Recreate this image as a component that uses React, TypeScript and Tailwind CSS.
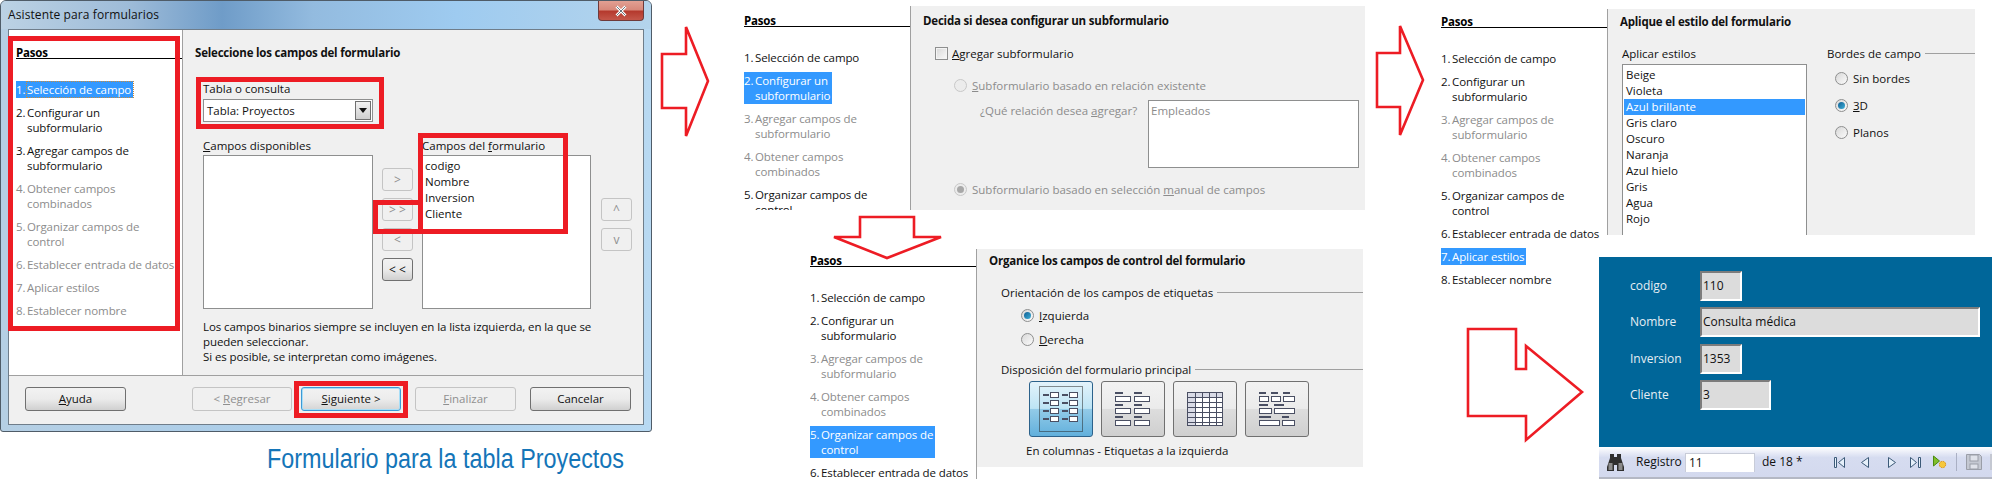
import React from "react";

const RED = "#ed1c24";
const STEPS: [string, string][] = [
  ["1.", "Selección de campo"],
  ["2.", "Configurar un\nsubformulario"],
  ["3.", "Agregar campos de\nsubformulario"],
  ["4.", "Obtener campos\ncombinados"],
  ["5.", "Organizar campos de\ncontrol"],
  ["6.", "Establecer entrada de datos"],
  ["7.", "Aplicar estilos"],
  ["8.", "Establecer nombre"],
];

function Sidebar({ active, disabled, width, focus }: { active: number; disabled: number[]; width: number; focus?: boolean }) {
  return (
    <div className="shrink-0" style={{ width }}>
      <div className="h-[13px] box-border border-b border-black text-[11.5px] leading-[13px] font-bold tracking-[-0.2px] text-black">
        Pasos
      </div>
      <div className="mt-[22px] flex flex-col items-start gap-[6px]">
        {STEPS.map(([n, t], i) => {
          const isActive = i === active;
          const isOff = disabled.includes(i);
          return (
            <div
              key={n}
              className={`flex py-px leading-[15px] tracking-[-0.1px] ${isActive ? "bg-[#3399ff] text-white" : isOff ? "text-[#8c8c8c]" : "text-[#111111]"}`}
            >
              <span className="w-[11px] shrink-0">{n}</span>
              <span className={`whitespace-pre-line pr-[2px] ${isActive && focus ? "outline-1 outline-dotted outline-[#c98a3a]" : ""}`}>{t}</span>
            </div>
          );
        })}
      </div>
    </div>
  );
}

function Btn({ children, off, primary, className = "" }: { children: React.ReactNode; off?: boolean; primary?: boolean; className?: string }) {
  return (
    <div
      className={`flex items-center justify-center rounded-[3px] border ${
        off
          ? "border-[#c4c4c4] bg-[#f0f0f0] text-[#8f8f8f]"
          : primary
          ? "border-[#3c9ad6] bg-gradient-to-b from-[#f2f2f2] via-[#ececec] to-[#d4d4d4] text-[#111111] shadow-[inset_0_0_0_1px_#a8def7]"
          : "border-[#707070] bg-gradient-to-b from-[#f2f2f2] via-[#ebebeb] to-[#d0d0d0] text-[#111111]"
      } ${className}`}
    >
      {children}
    </div>
  );
}

function Radio({ on, off }: { on?: boolean; off?: boolean }) {
  return (
    <span
      className={`flex h-[13px] w-[13px] shrink-0 items-center justify-center rounded-full border ${
        off ? "border-[#c8c8c8] bg-[#ececec]" : "border-[#8e8f8f] bg-gradient-to-br from-[#d8d8d8] to-[#fbfbfb]"
      }`}
    >
      {on && <span className={`h-[7px] w-[7px] rounded-full ${off ? "bg-[#a8a8a8]" : "bg-gradient-to-br from-[#0f5f94] to-[#3fb0d8]"}`} />}
    </span>
  );
}

function Frame({ x, y, w, h }: { x: number; y: number; w: number; h: number }) {
  return <div className="absolute box-border border-[5px] border-[#ed1c24]" style={{ left: x, top: y, width: w, height: h }} />;
}

function Arrow({ points, x, y, w, h }: { points: string; x: number; y: number; w: number; h: number }) {
  return (
    <svg className="absolute" style={{ left: x, top: y }} width={w} height={h} viewBox={`${x} ${y} ${w} ${h}`}>
      <polygon points={points} fill="none" stroke={RED} strokeWidth="2.6" strokeLinejoin="miter" />
    </svg>
  );
}

function Wizard() {
  return (
    <div className="absolute left-0 top-0 flex h-[432px] w-[652px] flex-col overflow-hidden rounded-t-[6px] rounded-b-[3px] border border-[#4f5c68] bg-gradient-to-r from-[#b5cfe4] via-[#a9cdea] to-[#b8d9f2]">
      <div className="relative flex h-[28px] shrink-0 items-center bg-[linear-gradient(90deg,#bcd2e4_0%,#9dbbd8_20%,#6f9cc8_34%,#93bbdf_48%,#9ecbf0_70%,#b4d4ec_100%)] pl-[7px] text-[12px] tracking-[0.1px] text-[#111111]">
        <span>Asistente para formularios</span>
        <div className="absolute right-[7px] top-0 flex h-[20px] w-[46px] items-center justify-center rounded-b-[4px] border border-t-0 border-[#6e3a3a] bg-[linear-gradient(#e2a093_0%,#d8897b_45%,#b53a2e_55%,#c4574a_100%)]">
          <svg width="12" height="12" viewBox="0 0 12 12">
            <path d="M1.5 1.5 L10.5 10.5 M10.5 1.5 L1.5 10.5" stroke="#ffffff" strokeWidth="2.8" />
            <path d="M1.5 1.5 L10.5 10.5 M10.5 1.5 L1.5 10.5" stroke="#41505c" strokeWidth="0.8" />
          </svg>
        </div>
      </div>
      <div className="mx-[7px] flex h-[396px] flex-col border border-[#6f7d8a] bg-[#f0f0f0]">
        <div className="flex h-[346px] border-b border-[#a0a0a0]">
          <div className="h-full w-[174px] shrink-0 border-r border-[#a0a0a0] bg-white pl-[7px] pt-[16px]">
            <Sidebar active={0} disabled={[3, 4, 5, 6, 7]} width={166} focus />
          </div>
          <div className="flex-1 pl-[12px] text-[#111111]">
            <div className="mt-[16px] h-[14px] text-[11.5px] leading-[14px] font-bold tracking-[-0.2px]">Seleccione los campos del formulario</div>
            <div className="ml-[8px]">
              <div className="mt-[21px] leading-[15px]">Tabla o consulta</div>
              <div className="mt-[3px] flex h-[23px] w-[170px] items-center justify-between border border-[#8e8f8f] bg-white pl-[3px] pr-[1px]">
                <span>Tabla: Proyectos</span>
                <span className="flex h-[19px] w-[16px] items-center justify-center border border-[#707070] bg-gradient-to-b from-[#f2f2f2] to-[#cfcfcf]">
                  <svg width="8" height="5" viewBox="0 0 8 5"><path d="M0 0H8L4 5Z" fill="#111" /></svg>
                </span>
              </div>
              <div className="mt-[16px] flex">
                <div className="w-[170px]">
                  <div className="h-[12px] leading-[15px]"><u>C</u>ampos disponibles</div>
                  <div className="mt-[5px] h-[154px] border border-[#8e8f8f] bg-white" />
                </div>
                <div className="ml-[9px] mt-[30px] flex w-[31px] flex-col gap-[7px]">
                  <Btn off className="h-[23px] text-[12px]">&gt;</Btn>
                  <Btn off className="h-[23px] text-[12px]">&gt; &gt;</Btn>
                  <Btn off className="h-[23px] text-[12px]">&lt;</Btn>
                  <Btn className="h-[23px] text-[12px]">&lt; &lt;</Btn>
                </div>
                <div className="ml-[9px] w-[169px]">
                  <div className="h-[12px] leading-[15px]">Campos del <u>f</u>ormulario</div>
                  <div className="mt-[5px] h-[154px] border border-[#8e8f8f] bg-white pl-[2px] pt-[2px] leading-[16px]">
                    <div>codigo</div>
                    <div>Nombre</div>
                    <div>Inversion</div>
                    <div>Cliente</div>
                  </div>
                </div>
                <div className="ml-[10px] mt-[60px] flex w-[31px] flex-col gap-[7px]">
                  <Btn off className="h-[23px] text-[12px]">^</Btn>
                  <Btn off className="h-[23px] text-[12px]">v</Btn>
                </div>
              </div>
              <div className="mt-[10px] whitespace-nowrap leading-[15px] tracking-[-0.1px]">
                Los campos binarios siempre se incluyen en la lista izquierda, en la que se
                <br />
                pueden seleccionar.
                <br />
                Si es posible, se interpretan como imágenes.
              </div>
            </div>
          </div>
        </div>
        <div className="flex flex-1 items-start pl-[16px] pt-[11px] text-[#111111]">
          <Btn className="h-[24px] w-[101px]"><span><u>A</u>yuda</span></Btn>
          <Btn off className="ml-[66px] h-[24px] w-[100px]"><span>&lt; <u>R</u>egresar</span></Btn>
          <Btn primary className="ml-[9px] h-[24px] w-[100px]"><span><u>S</u>iguiente &gt;</span></Btn>
          <Btn off className="ml-[14px] h-[24px] w-[101px]"><span><u>F</u>inalizar</span></Btn>
          <Btn className="ml-[14px] h-[24px] w-[101px]">Cancelar</Btn>
        </div>
      </div>
    </div>
  );
}

function GridIcon() {
  const col = "#4a4f63";
  return (
    <svg width="36" height="34" viewBox="0 0 36 34">
      <rect x="0.5" y="0.5" width="35" height="33" fill="#fff" stroke={col} />
      <rect x="1" y="1" width="34" height="4" fill="#d9dbe6" />
      <rect x="1" y="6" width="7" height="27" fill="#d9dbe6" />
      {[0, 1, 2, 3, 4, 5].map((i) => (
        <line key={`h${i}`} x1="0" x2="36" y1={5.5 + i * 5} y2={5.5 + i * 5} stroke={col} />
      ))}
      {[0, 1, 2, 3].map((i) => (
        <line key={`v${i}`} y1="0" y2="34" x1={8.5 + i * 7} x2={8.5 + i * 7} stroke={col} />
      ))}
    </svg>
  );
}

function FieldRow({ x, y, w, lw = 0 }: { x: number; y: number; w: number; lw?: number }) {
  return (
    <g>
      {lw > 0 && <rect x={x} y={y} width={lw} height="2" fill="#4a4f63" />}
      <rect x={x + 0.5} y={y + 4.5} width={w} height="5" fill="#fff" stroke="#4a4f63" />
    </g>
  );
}

function LayoutIcon({ kind }: { kind: number }) {
  if (kind === 0) {
    return (
      <svg width="46" height="46" viewBox="0 0 46 46">
        <rect x="1.5" y="0.5" width="43" height="45" fill="none" stroke="#222" strokeDasharray="1 1" />
        {[6, 14, 22, 30].map((y) => (
          <g key={y}>
            <rect x="5" y={y + 2} width="6" height="2" fill="#4a4f63" />
            <rect x="12.5" y={y + 0.5} width="8" height="5" fill="#fff" stroke="#4a4f63" />
            <rect x="24" y={y + 2} width="6" height="2" fill="#4a4f63" />
            <rect x="31.5" y={y + 0.5} width="8" height="5" fill="#fff" stroke="#4a4f63" />
          </g>
        ))}
      </svg>
    );
  }
  if (kind === 1) {
    return (
      <svg width="36" height="34" viewBox="0 0 36 34">
        {[0, 12, 24].map((y) => (
          <g key={y}>
            <FieldRow x={0} y={y} w={15} lw={8} />
            <FieldRow x={19} y={y} w={15} lw={8} />
          </g>
        ))}
      </svg>
    );
  }
  if (kind === 2) return <GridIcon />;
  return (
    <svg width="36" height="34" viewBox="0 0 36 34">
      <FieldRow x={0} y={0} w={9} lw={7} />
      <FieldRow x={12} y={0} w={9} lw={7} />
      <FieldRow x={24} y={0} w={11} lw={7} />
      <FieldRow x={0} y={12} w={12} lw={9} />
      <FieldRow x={15} y={12} w={20} lw={10} />
      <FieldRow x={0} y={24} w={20} lw={12} />
      <FieldRow x={23} y={24} w={12} lw={7} />
    </svg>
  );
}

function ImgBtn({ i, on }: { i: number; on?: boolean }) {
  return (
    <div
      className={`flex h-[56px] w-[64px] items-center justify-center rounded-[3px] border ${
        on ? "border-[#2c628b] bg-[linear-gradient(#e3f3fb_0%,#bde4f5_49%,#93cbe8_50%,#62b0dc_100%)]" : "border-[#707070] bg-[linear-gradient(#f2f2f2_0%,#ebebeb_49%,#dddddd_50%,#cfcfcf_100%)]"
      }`}
    >
      <LayoutIcon kind={i} />
    </div>
  );
}

function Field({ label, value, w }: { label: string; value: string; w: number }) {
  return (
    <div className="flex h-[30px] items-center">
      <span className="w-[70px] text-[12px] text-[#e6eef4]">{label}</span>
      <div
        className="box-border flex h-[30px] items-center border-2 border-t-[#7c7c7c] border-l-[#7c7c7c] border-r-white border-b-white bg-[#dcdcdc] pl-[1px] text-[12px] text-[#111111]"
        style={{ width: w }}
      >
        {value}
      </div>
    </div>
  );
}

function NavIcon({ d, w, className = "" }: { d: string; w: number; className?: string }) {
  return (
    <svg width={w} height="13" viewBox={`0 0 ${w} 13`} className={`shrink-0 ${className}`}>
      <path d={d} fill="#e6f0fa" stroke="#3c5a78" strokeWidth="1" />
    </svg>
  );
}

function Toolbar() {
  return (
    <div className="flex h-[32px] items-center overflow-hidden border-b-2 border-[#b4b8c4] bg-[linear-gradient(#ffffff_0%,#d6dcf0_35%,#d3d9ee_100%)] pl-[8px] text-[12px] text-[#111111]">
      <svg width="17" height="17" viewBox="0 0 17 17" className="shrink-0">
        <path d="M3 0h4v3h3V0h4v4l3 9v4h-7v-6H7v6H0v-4l3-9z" fill="#2f2f2f" />
        <rect x="1.5" y="9" width="4" height="7" fill="#8a8a8a" />
        <rect x="11.5" y="9" width="4" height="7" fill="#8a8a8a" />
      </svg>
      <span className="ml-[12px] w-[49px] shrink-0">Registro</span>
      <div className="flex h-[19px] w-[70px] shrink-0 items-center border border-b-0 border-[#c8ccd8] bg-white pl-[3px]">11</div>
      <span className="ml-[7px] w-[72px] shrink-0">de 18 *</span>
      <NavIcon w={11} d="M.5 1.5h2v10h-2z M10.5 1.5v10l-6-5z" />
      <NavIcon w={8} className="ml-[16px]" d="M7.5 1.5v10l-7-5z" />
      <NavIcon w={8} className="ml-[19px]" d="M.5 1.5v10l7-5z" />
      <NavIcon w={11} className="ml-[14px]" d="M.5 1.5v10l6-5z M8.5 1.5h2v10h-2z" />
      <svg width="15" height="15" viewBox="0 0 15 15" className="ml-[11px] shrink-0">
        <path d="M1.5 1v10l6-5z" fill="#7fbf2a" stroke="#4b8a10" />
        <circle cx="10.5" cy="9.5" r="3.2" fill="#f6c83c" stroke="#d98f10" strokeDasharray="1.5 1" />
      </svg>
      <span className="ml-[9px] h-[18px] w-px shrink-0 bg-[#aab0c4]" />
      <svg width="16" height="16" viewBox="0 0 16 16" className="ml-[9px] shrink-0">
        <path d="M.5.5h13l2 2v13H.5z" fill="#c4c8d2" stroke="#9a9ea8" />
        <rect x="4" y="1" width="8" height="6" fill="#dfe2ea" stroke="#9a9ea8" />
        <rect x="4" y="10" width="8" height="5" fill="#dfe2ea" stroke="#9a9ea8" />
      </svg>
      <span className="ml-[8px] h-[16px] w-[2px] shrink-0 bg-[#c4c8d2]" />
    </div>
  );
}

export default function App() {
  return (
    <div className="relative h-[482px] w-[2000px] overflow-hidden bg-white text-[11.5px] [font-family:'Open_Sans','Noto_Sans',sans-serif]">
      <Wizard />

      <Frame x={8} y={36} w={172} h={295} />
      <Frame x={196} y={77} w={188} h={52} />
      <Frame x={373} y={200} w={50} h={34} />
      <Frame x={418} y={133} w={150} h={101} />
      <Frame x={294} y={381} w={114} h={37} />

      <div className="absolute left-[267px] top-[442px] origin-left scale-x-[0.865] whitespace-nowrap text-[27px] leading-[34px] text-[#1475b8] [font-family:'Liberation_Sans',sans-serif]">
        Formulario para la tabla Proyectos
      </div>

      <Arrow points="662,54 686,54 686,27 708,81 686,136 686,108 662,108" x={655} y={20} w={60} h={122} />

      {/* Panel 2 */}
      <div className="absolute left-[744px] top-[6px] flex h-[204px] w-[621px] overflow-hidden">
        <div className="pt-[8px]"><Sidebar active={1} disabled={[2, 3]} width={166} /></div>
        <div className="h-full flex-1 border-l border-[#a0a0a0] bg-[#f0f0f0] pl-[12px] text-[#111111]">
          <div className="mt-[8px] h-[14px] text-[11.5px] leading-[14px] font-bold tracking-[-0.2px]">Decida si desea configurar un subformulario</div>
          <div className="ml-[12px] mt-[18px] flex items-center gap-[4px]">
            <span className="h-[13px] w-[13px] border border-[#8e8f8f] bg-gradient-to-br from-[#d8d8d8] to-[#fafafa] shadow-[inset_0_0_0_1px_#f4f4f4]" />
            <span className="leading-[15px]"><u>A</u>gregar subformulario</span>
          </div>
          <div className="ml-[31px] mt-[17px] flex items-center gap-[5px] text-[#8c8c8c]">
            <Radio off />
            <span className="leading-[15px]"><u>S</u>ubformulario basado en relación existente</span>
          </div>
          <div className="ml-[57px] mt-[7px] flex items-start text-[#8c8c8c]">
            <span className="mt-[3px] w-[168px] leading-[15px]">¿Qué relación desea <u>a</u>gregar?</span>
            <div className="h-[68px] w-[211px] border border-[#8e8f8f] bg-white pl-[2px] pt-[2px] leading-[15px]">Empleados</div>
          </div>
          <div className="ml-[31px] mt-[14px] flex items-center gap-[5px] text-[#8c8c8c]">
            <Radio off on />
            <span className="leading-[15px]">Subformulario basado en selección <u>m</u>anual de campos</span>
          </div>
        </div>
      </div>

      {/* Panel 3 */}
      <div className="absolute left-[1441px] top-[9px] flex w-[534px] items-start">
        <div className="pt-[6px]"><Sidebar active={6} disabled={[2, 3]} width={166} /></div>
        <div className="flex h-[226px] flex-1 flex-col overflow-hidden border-l border-[#a0a0a0] bg-[#f0f0f0] pl-[12px] text-[#111111]">
          <div className="mt-[6px] h-[14px] shrink-0 text-[11.5px] leading-[14px] font-bold tracking-[-0.2px]">Aplique el estilo del formulario</div>
          <div className="ml-[2px] mt-[17px] flex">
            <div className="w-[185px]">
              <div className="leading-[15px]">Aplicar estilos</div>
              <div className="mt-[3px] h-[180px] border border-[#8e8f8f] bg-white px-px pt-[2px] leading-[16px]">
                {["Beige", "Violeta", "Azul brillante", "Gris claro", "Oscuro", "Naranja", "Azul hielo", "Gris", "Agua", "Rojo"].map((s, i) => (
                  <div key={s} className={`pl-[2px] ${i === 2 ? "bg-[#3399ff] text-white" : ""}`}>{s}</div>
                ))}
              </div>
            </div>
            <div className="ml-[20px] flex-1">
              <div className="flex items-center gap-[4px] leading-[15px]">
                <span className="shrink-0">Bordes de campo</span>
                <span className="h-px flex-1 bg-[#a0a0a0]" />
              </div>
              <div className="ml-[8px] mt-[10px] flex flex-col gap-[12px]">
                <div className="flex h-[15px] items-center gap-[5px]"><Radio /><span>Sin bordes</span></div>
                <div className="flex h-[15px] items-center gap-[5px]"><Radio on /><span><u>3</u>D</span></div>
                <div className="flex h-[15px] items-center gap-[5px]"><Radio /><span>Planos</span></div>
              </div>
            </div>
          </div>
        </div>
      </div>

      {/* Panel 4 */}
      <div className="absolute left-[810px] top-[249px] flex h-[230px] w-[553px] overflow-hidden">
        <div className="pt-[5px]"><Sidebar active={4} disabled={[2, 3]} width={166} /></div>
        <div className="h-full flex-1 border-l border-[#a0a0a0]">
          <div className="h-[218px] bg-[#f0f0f0] pl-[12px] text-[#111111]">
            <div className="h-[19px] pt-[5px] text-[11.5px] leading-[14px] font-bold tracking-[-0.2px]">Organice los campos de control del formulario</div>
            <div className="ml-[12px] mt-[17px] flex items-center gap-[4px] leading-[15px]">
              <span className="shrink-0">Orientación de los campos de etiquetas</span>
              <span className="h-px flex-1 bg-[#a0a0a0]" />
            </div>
            <div className="ml-[32px] mt-[8px] flex h-[15px] items-center gap-[5px]"><Radio on /><span><u>I</u>zquierda</span></div>
            <div className="ml-[32px] mt-[9px] flex h-[15px] items-center gap-[5px]"><Radio /><span><u>D</u>erecha</span></div>
            <div className="ml-[12px] mt-[15px] flex items-center gap-[4px] leading-[15px]">
              <span className="shrink-0">Disposición del formulario principal</span>
              <span className="h-px flex-1 bg-[#a0a0a0]" />
            </div>
            <div className="ml-[40px] mt-[4px] flex gap-[8px]">
              <ImgBtn i={0} on />
              <ImgBtn i={1} />
              <ImgBtn i={2} />
              <ImgBtn i={3} />
            </div>
            <div className="ml-[37px] mt-[6px] leading-[15px]">En columnas - Etiquetas a la izquierda</div>
          </div>
        </div>
      </div>

      <Arrow points="860,217 914,217 914,237 941,237 887,258 834,237 860,237" x={828} y={212} w={120} h={50} />
      <Arrow points="1377,53 1400,53 1400,26 1423,80 1400,135 1400,107 1377,107" x={1370} y={20} w={60} h={122} />
      <Arrow points="1468,329 1516,329 1516,369 1526,369 1526,346 1582,392 1526,440 1526,416 1468,416" x={1462} y={322} w={126} h={124} />

      {/* Result form */}
      <div className="absolute left-[1599px] top-[257px] w-[393px]">
        <div className="flex h-[190px] flex-col gap-[6.33px] bg-[#006699] pl-[31px] pt-[14px]">
          <Field label="codigo" value="110" w={42} />
          <Field label="Nombre" value="Consulta médica" w={280} />
          <Field label="Inversion" value="1353" w={42} />
          <Field label="Cliente" value="3" w={71} />
        </div>
        <Toolbar />
      </div>
    </div>
  );
}
